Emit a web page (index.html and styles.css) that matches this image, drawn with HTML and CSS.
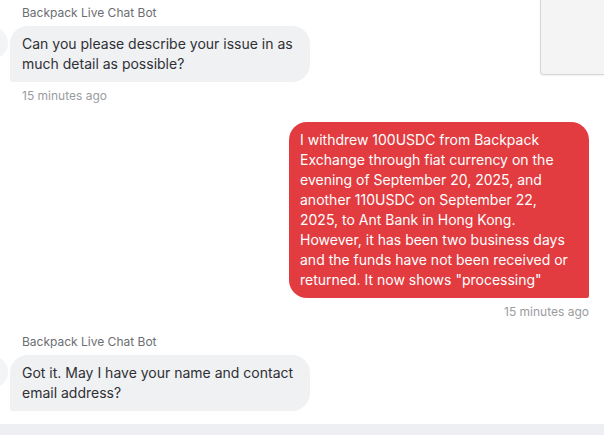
FILE: index.html
```html
<!DOCTYPE html>
<html lang="en">
<head>
<meta charset="utf-8">
<title>Backpack Live Chat</title>
<link rel="stylesheet" href="styles.css">
</head>
<body>
<div class="panel"></div>
<div class="chat">
  <div class="group bot">
    <div class="avatar"></div>
    <div class="name">Backpack Live Chat Bot</div>
    <div class="bubble bot-bubble">Can you please describe your issue in as much detail as possible?</div>
    <div class="time">15 minutes ago</div>
  </div>
  <div class="group user">
    <div class="bubble user-bubble">I withdrew 100USDC from Backpack Exchange through fiat currency on the evening of September 20, 2025, and another 110USDC on September 22, 2025, to Ant Bank in Hong Kong. However, it has been two business days and the funds have not been received or returned. It now shows "processing"</div>
    <div class="time">15 minutes ago</div>
  </div>
  <div class="group bot second">
    <div class="avatar"></div>
    <div class="name">Backpack Live Chat Bot</div>
    <div class="bubble bot-bubble">Got it. May I have your name and contact email address?</div>
  </div>
</div>
<div class="composer"></div>
</body>
</html>
```
FILE: styles.css
```css
html, body {
  margin: 0;
  padding: 0;
  background: #ffffff;
  font-family: Inter, "Noto Sans", sans-serif;
  color: #333333;
  overflow: hidden;
}

body {
  position: relative;
}

.chat {
  display: flex;
  flex-direction: column;
  padding: 5px 15px 0 10px;
}

.group {
  display: flex;
  flex-direction: column;
  position: relative;
}

.group.bot {
  align-items: flex-start;
}

.group.user {
  align-items: flex-end;
  margin-top: 18px;
}

.group.second {
  margin-top: 14px;
}

.avatar {
  position: absolute;
  left: -34px;
  top: 22px;
  width: 32px;
  height: 32px;
  border-radius: 50%;
  background: #f3f4f6;
}

.name {
  font-size: 12px;
  line-height: 16px;
  color: #6b6e73;
  margin-left: 12px;
  margin-bottom: 5px;
}

.bubble {
  box-sizing: border-box;
  max-width: 300px;
  font-size: 14px;
  line-height: 20px;
  padding: 8px 12px;
}

.bot-bubble {
  width: 300px;
  background: #f0f1f3;
  color: #2f3033;
  border-radius: 18px 18px 18px 2px;
}

.user-bubble {
  width: 300px;
  background: #e23c40;
  color: #ffffff;
  padding: 8px 11px;
  border-radius: 18px 18px 2px 18px;
}

.time {
  font-size: 12px;
  line-height: 16px;
  color: #9a9ca1;
  margin-top: 6px;
}

.bot .time {
  margin-left: 12px;
}

.composer {
  margin-top: 13px;
  height: 12px;
  background: #eeeff2;
}

.panel {
  position: absolute;
  top: 0;
  left: 540px;
  width: 64px;
  height: 75px;
  box-sizing: border-box;
  background: #f4f4f4;
  border-left: 1px solid #d6d6d6;
  border-bottom: 1px solid #d6d6d6;
  border-radius: 0 0 0 4px;
  box-shadow: 0 1px 2px rgba(0, 0, 0, 0.06);
  z-index: 2;
}
```
